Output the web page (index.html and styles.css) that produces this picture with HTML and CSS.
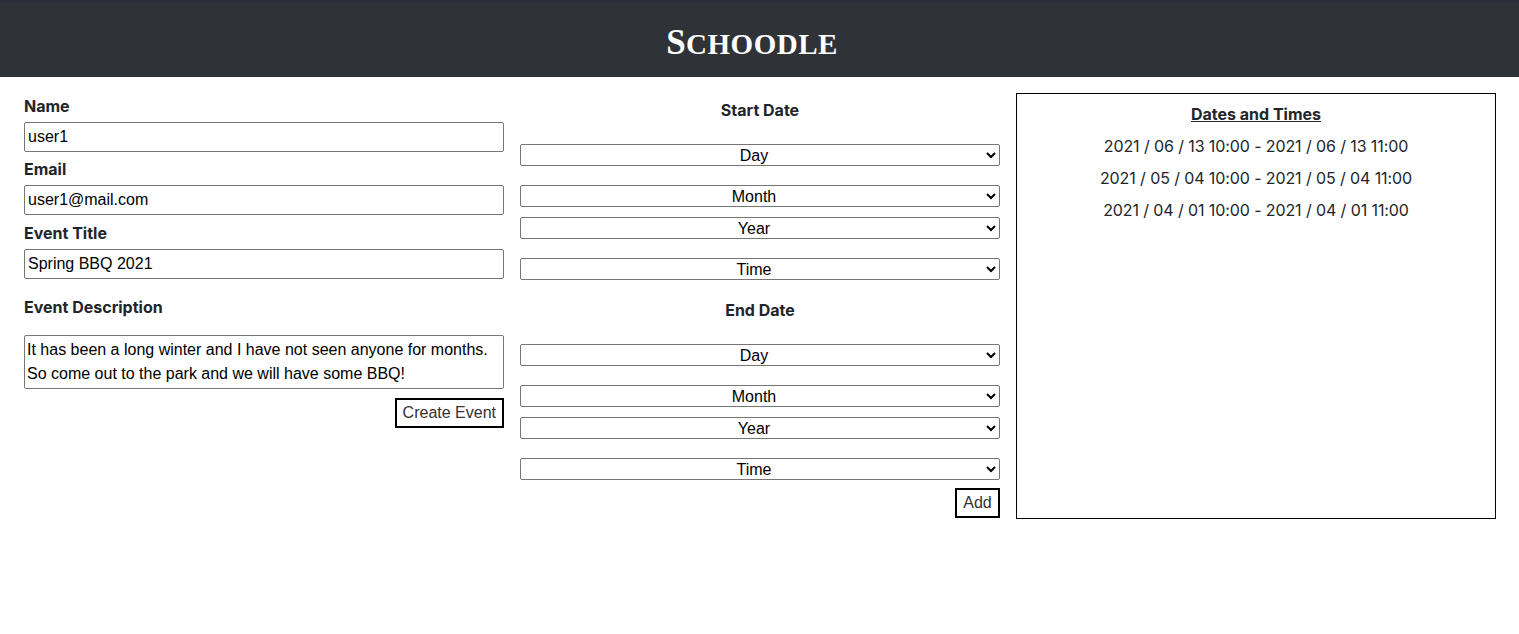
FILE: index.html
```html
<!DOCTYPE html>
<html lang="en">
<head>
<meta charset="utf-8">
<title>Schoodle</title>
<link rel="stylesheet" href="styles.css">
</head>
<body>
<header class="topbar">
  <h1 class="brand">S<span class="brand-sc">choodle</span></h1>
</header>
<main class="layout">
  <section class="col col-event">
    <label class="lbl lbl-first" for="name">Name</label>
    <input class="field" id="name" type="text" value="user1">
    <label class="lbl" for="email">Email</label>
    <input class="field" id="email" type="text" value="user1@mail.com">
    <label class="lbl lbl-title" for="title">Event Title</label>
    <input class="field" id="title" type="text" value="Spring BBQ 2021">
    <label class="lbl lbl-desc" for="desc">Event Description</label>
    <textarea class="field area" id="desc" rows="2">It has been a long winter and I have not seen anyone for months. So come out to the park and we will have some BBQ!</textarea>
    <div class="actions">
      <button class="btn" type="button">Create Event</button>
    </div>
  </section>

  <section class="col col-dates">
    <div class="dategroup">
      <div class="grouptitle">Start Date</div>
      <select class="sel sel-day"><option>Day</option></select>
      <select class="sel sel-month"><option>Month</option></select>
      <select class="sel sel-year"><option>Year</option></select>
      <select class="sel sel-time"><option>Time</option></select>
    </div>
    <div class="dategroup">
      <div class="grouptitle">End Date</div>
      <select class="sel sel-day"><option>Day</option></select>
      <select class="sel sel-month"><option>Month</option></select>
      <select class="sel sel-year"><option>Year</option></select>
      <select class="sel sel-time"><option>Time</option></select>
    </div>
    <div class="actions actions-add">
      <button class="btn btn-add" type="button">Add</button>
    </div>
  </section>

  <section class="col list-box">
    <h2 class="list-title">Dates and Times</h2>
    <ul class="list">
      <li>2021 / 06 / 13 10:00 - 2021 / 06 / 13 11:00</li>
      <li>2021 / 05 / 04 10:00 - 2021 / 05 / 04 11:00</li>
      <li>2021 / 04 / 01 10:00 - 2021 / 04 / 01 11:00</li>
    </ul>
  </section>
</main>
</body>
</html>
```
FILE: styles.css
```css
* { box-sizing: border-box; }

html, body {
  margin: 0;
  padding: 0;
  background: #ffffff;
  color: #212529;
  font-family: Inter, "Noto Sans", sans-serif;
  font-size: 16px;
}

.topbar {
  height: 77px;
  background: #2f3337;
  border-top: 3px solid #2a2e3a;
  display: flex;
  align-items: center;
  justify-content: center;
  padding-right: 15px;
}

.brand {
  margin: 0;
  color: #ffffff;
  font-family: "Liberation Serif", "Times New Roman", serif;
  font-weight: 700;
  font-size: 35px;
  letter-spacing: 0.5px;
  line-height: 1;
  padding-top: 4px;
}

.brand-sc {
  font-size: 29px;
  text-transform: uppercase;
}

.layout {
  display: grid;
  grid-template-columns: 480px 480px 480px;
  column-gap: 16px;
  padding: 16px 0 0 24px;
  align-items: start;
}

.col { display: flex; flex-direction: column; }

.lbl {
  font-weight: 700;
  font-size: 16px;
  line-height: 20px;
  margin: 6.5px 0 6.5px;
}
.lbl-first { margin-top: 2.5px; }
.lbl-title { margin-top: 7.5px; }
.lbl-desc { margin: 18px 0 18px; }

.field {
  width: 480px;
  height: 30px;
  border: 1px solid #767676;
  border-radius: 2px;
  padding: 0 3px;
  font-family: "Liberation Sans", Arial, sans-serif;
  font-size: 16px;
  color: #000;
  background: #fff;
}

.area {
  height: 54px;
  line-height: 24px;
  padding: 2px 2px;
  resize: none;
  overflow: hidden;
}

.actions {
  display: flex;
  justify-content: flex-end;
  margin-top: 9px;
}
.actions-add { margin-top: 8px; }

.btn {
  background: #ffffff;
  border: 2px solid #000;
  border-radius: 0;
  height: 30px;
  padding: 0 6px;
  font-family: "Liberation Sans", Arial, sans-serif;
  font-size: 16px;
  color: #333;
}
.btn-add { width: 45px; padding: 0; }

.dategroup { display: flex; flex-direction: column; }
.dategroup + .dategroup { margin-top: 20px; }

.grouptitle {
  text-align: center;
  font-weight: 700;
  font-size: 16px;
  line-height: 20px;
  margin-top: 7px;
  margin-bottom: 24px;
}
.dategroup + .dategroup .grouptitle { margin-top: 0; }

.sel {
  width: 480px;
  height: 22px;
  padding: 0 2px;
  border: 1px solid #767676;
  border-radius: 2px;
  background: #fff;
  color: #000;
  font-family: "Liberation Sans", Arial, sans-serif;
  font-size: 16px;
  text-align: center;
  text-align-last: center;
}
.sel-month { margin-top: 19px; }
.sel-year { margin-top: 10px; }
.sel-time { margin-top: 19px; }

.list-box {
  border: 1px solid #000;
  height: 426px;
  align-items: center;
  padding-top: 8px;
}

.list-title {
  margin: 0;
  font-size: 16px;
  font-weight: 700;
  line-height: 24px;
  text-decoration: underline;
}

.list {
  list-style: none;
  margin: 4px 0 0;
  padding: 0;
  text-align: center;
}
.list li {
  line-height: 32px;
  font-size: 16px;
  letter-spacing: -0.1px;
}
```
